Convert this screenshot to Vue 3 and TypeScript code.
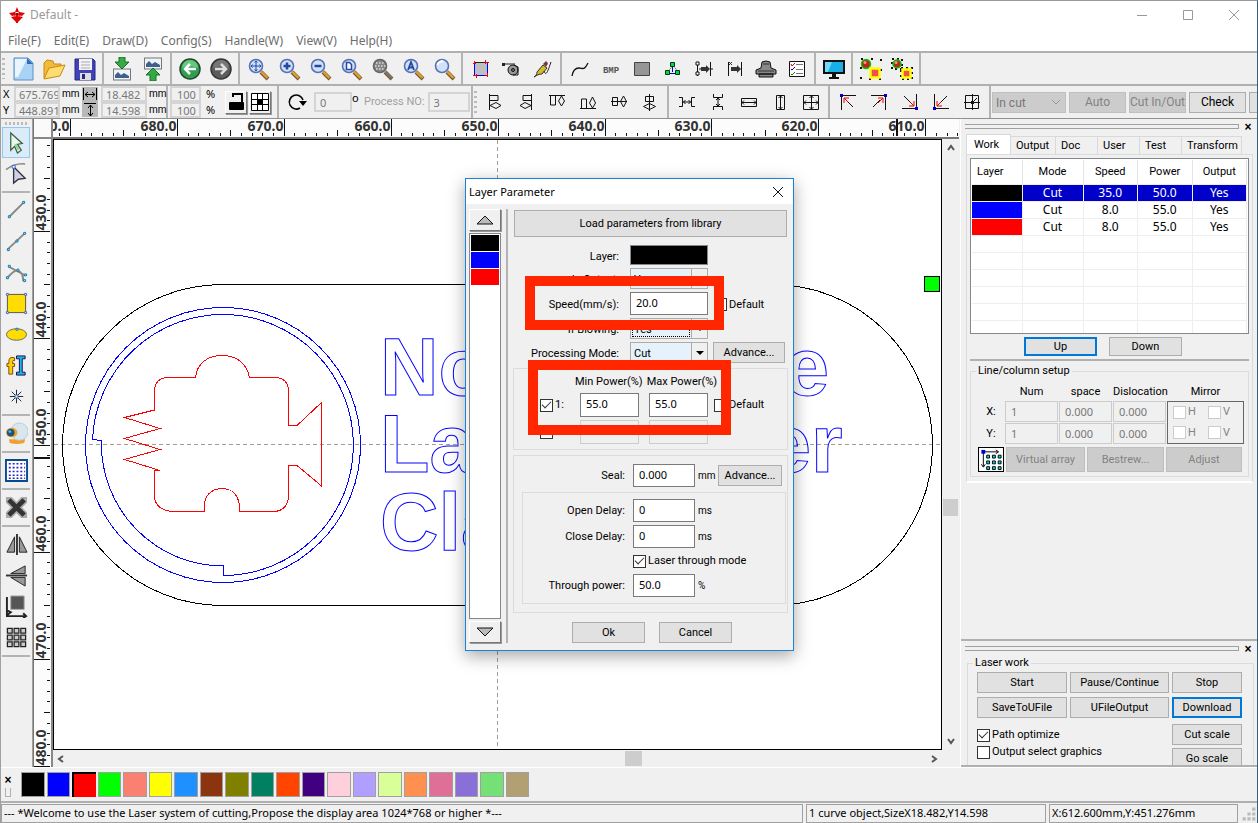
<script setup lang="ts">
import { ref } from 'vue'

type IconGroup = string[]

const menus = ['File(F)', 'Edit(E)', 'Draw(D)', 'Config(S)', 'Handle(W)', 'View(V)', 'Help(H)']

const lens = (inner: string, ring = '#5b6fb5', fill = '#cfe2fa', handle = '#e0a030') =>
  `<path d="M15 15l7 7" stroke="#7a5a30" stroke-width="4"/><path d="M15.500 15l6 6" stroke="${handle}" stroke-width="2.400"/><circle cx="10" cy="9" r="6.500" fill="${fill}" stroke="${ring}" stroke-width="1.600"/>${inner}`

const picture = (y: number) =>
  `<rect x="3.500" y="${y}" width="17" height="11" fill="#eef3f8" stroke="#777"/><path d="M5 ${y + 9}v-3l3-3 3 3 3-2 5 3v2z" fill="#3d618c"/>`

const icons: Record<string, string> = {
  new: '<path d="M3 1h14l5 5v17H3z" fill="#a9d3f5" stroke="#5b8fc4"/><path d="M4 2h12l-9 18H4z" fill="#e9f5ff"/><path d="M16 1v6h6z" fill="#2f70bd"/>',
  open: '<path d="M2 21V6l3-3 6 1 1 3h7v4" fill="#f3b93a" stroke="#c58a12"/><path d="M2 22l5-11 16-3-5 11z" fill="#ffdb70" stroke="#c58a12"/>',
  save: '<path d="M2 2h18l2 2v19H2z" fill="#4141bd" stroke="#26267d"/><path d="M6 2h13v11H6z" fill="#f4f4f4"/><path d="M8 5h9M8 8h9M8 11h9" stroke="#aaa"/><path d="M7 16h11v7H7z" fill="#ddd"/><path d="M9 17h3v5H9z" fill="#26267d"/>',
  import: picture(12) + '<path d="M9 0h6v5h4l-7 7-7-7h4z" fill="#36a845" stroke="#167326"/>',
  export: picture(1) + '<path d="M9 24h6v-6h4l-7-7-7 7h4z" fill="#36a845" stroke="#167326"/>',
  back: '<circle cx="12" cy="12" r="10" fill="#2fa050" stroke="#24452d" stroke-width="1.500"/><path d="M4 11a8 8 0 0 1 16 0c-5-2-11-2-16 0" fill="#66c77f"/><path d="M18 12H7m5-5l-5 5 5 5" fill="none" stroke="#fff" stroke-width="2.500"/>',
  forward: '<circle cx="12" cy="12" r="10" fill="#5c5c5c" stroke="#333" stroke-width="1.500"/><path d="M4 11a8 8 0 0 1 16 0c-5-2-11-2-16 0" fill="#777"/><path d="M6 12h11m-5-5l5 5-5 5" fill="none" stroke="#ddd" stroke-width="2.500"/>',
  zoomPan: lens('<path d="M10 4v10M5 9h10M8.500 5.500l1.500-1.500 1.500 1.500M8.500 12.500l1.500 1.500 1.500-1.500M6.500 7.500L5 9l1.500 1.500M13.500 7.500L15 9l-1.500 1.500" stroke="#2448a0" fill="none"/>'),
  zoomIn: lens('<path d="M10 5.500v7M6.500 9h7" stroke="#2448a0" stroke-width="2.500"/>'),
  zoomOut: lens('<path d="M6.500 9h7" stroke="#2448a0" stroke-width="2.500"/>'),
  zoomPage: lens('<path d="M7.500 5.500h3l2 2v5h-5z" fill="#fff" stroke="#2448a0" stroke-width="1.500"/>'),
  zoomGrid: lens('<path d="M6 6h9M5 9h11M6 12h9" stroke="#ddd" stroke-width="1.500" stroke-dasharray="1.500 1.500"/>', '#666', '#858585', '#777'),
  zoomAll: lens('<path d="M7 13l3-8 3 8M8 10.500h4" stroke="#2448a0" stroke-width="1.800" fill="none"/>'),
  zoomView: lens('<path d="M5.500 8a5 5 0 0 1 6-3.500" stroke="#fff" stroke-width="2" fill="none"/>'),
  bounds: '<path d="M5.500 5.500h13v13h-13z" fill="#bfbfbf" stroke="#222"/><path d="M5.500 6v12.500h13V6" fill="none" stroke="#00f"/><path d="M5.500 4v3M4 6.500h3M16.500 3v4M16 5.500h4M7.500 17v4M4 18.500h3M18.500 16v4M16 18.500h3" stroke="#f00"/>',
  tape: '<path d="M3 7h12" stroke="#222"/><path d="M2 6h3v3H2z" fill="#222"/><circle cx="13" cy="13" r="5" fill="#999" stroke="#111"/><path d="M14 8l4 2v8h-5" stroke="#111" fill="none"/><circle cx="13" cy="13" r="1.500" fill="#777" stroke="#111"/>',
  pen: '<path d="M3 20c2-1 3-3 3-5l6-7 4 3-5 6c-3 0-5 1-8 3z" fill="#d5bc24" stroke="#333"/><path d="M12 7l3-3 2 2-2 4z" fill="#555"/><path d="M13 14c2 6 4 0 7-9" stroke="#222" fill="none"/><path d="M14 6l2 2" stroke="#d00" stroke-width="1.500"/>',
  curve: '<path d="M4 19c1-6 3-8 7-8s5 3 9-5" stroke="#111" fill="none" stroke-width="1.300"/>',
  bmp: '<text x="12" y="16" text-anchor="middle" font-family="Liberation Mono, monospace" font-weight="700" font-size="9" fill="#555">BMP</text>',
  block: '<path d="M4.500 5.500h15v13h-15z" fill="#969696" stroke="#444"/>',
  tree: '<path d="M11.500 7v8M6 16.500h12" stroke="#00c" fill="none"/><path d="M12 9l-5 5M12 9l5 5" stroke="#666" stroke-dasharray="2 1"/><path d="M9.500 5.500h4v4h-4zM4.500 13.500h4v4h-4zM14.500 13.500h4v4h-4z" fill="#0d3" stroke="#032"/>',
  offsetA: '<path d="M5.500 5v14M18.500 5v14M7 12h4M18 12h3" stroke="#111"/><path d="M4 5h3v3H4zM4 15h3v3H4z" fill="#fff" stroke="#111"/><path d="M9 10h6v4H9zM14 8l4 4-4 4z" fill="#333"/>',
  offsetB: '<path d="M5.500 5v14M18.500 5v14" stroke="#111"/><path d="M8 10h6v4H8zM14 8l4 4-4 4z" fill="#333"/><path d="M6 5l3 3m0-3l-3 3" stroke="#333"/>',
  machine: '<path d="M7 11l1-6q4-2 8 0l1 6 5 2v4H2v-4zM5 17h14v3H5z" fill="#888" stroke="#111"/><path d="M9 7h6M4 14h16" stroke="#333"/>',
  checklist: '<path d="M4.500 4.500h15v15h-15z" fill="#fff" stroke="#111"/><path d="M11 7.500h7M11 12.500h7M11 16.500h7" stroke="#777"/><path d="M6 7l1 2 3-3" stroke="#d00" fill="none"/><path d="M6 12l1 1 3-3" stroke="#00c" fill="none"/><path d="M6 17l1 1 3-3" stroke="#080" fill="none"/>',
  screen: '<path d="M1 3h22v14H1z" fill="#111"/><path d="M3 5h18v10H3z" fill="#19aee6"/><path d="M3 5h7L6 15H3z" fill="#70dafa"/><path d="M10 17h4v3h3v2H7v-2h3z" fill="#111"/>',
  groupA: '<path d="M2 2h20v20H2z" fill="none" stroke="#111" stroke-width="2" stroke-dasharray="2 8"/><circle cx="7" cy="7" r="4.500" fill="#c32020" stroke="#0c0" stroke-width="1.500"/><circle cx="6" cy="5.500" r="1.500" fill="#ff9090"/><path d="M11.500 11.500h9v9h-9z" fill="#f05050" stroke="#ff0" stroke-width="2.500"/>',
  groupB: '<path d="M2 2h10v10H2zM11 11h11v11H11z" fill="none" stroke="#111" stroke-width="2" stroke-dasharray="2 3"/><circle cx="7" cy="7" r="4" fill="#c32020" stroke="#0c0" stroke-width="1.500"/><circle cx="6" cy="5.500" r="1.500" fill="#ff9090"/><path d="M12.500 12.500h8v8h-8z" fill="#f05050" stroke="#ff0" stroke-width="2.500"/>',
  alignL: '<path d="M6.500 4v16M7 5.500h8v5H7M7 15.500l6-3 5 3-5 3z"/>',
  alignR: '<path d="M17.500 4v16M17 5.500H9v5h8M17 15.500l-6-3-5 3 5 3z"/>',
  alignT: '<path d="M4 5.500h16M5.500 6v9h5V6M16.500 6l-3 5 3 5 3-5z"/>',
  alignB: '<path d="M4 18.500h16M5.500 18v-9h5v9M16.500 18l-3-5 3-6 3 6z"/>',
  alignCH: '<path d="M4 11.500h16M5.500 7.500h5v8h-5zM16.500 6l-3 5.500 3 5.500 3-5.500z"/>',
  alignCV: '<path d="M11.500 4v17M7.500 6.500h8v5h-8zM11.500 13.500l-6 3 6 3 6-3z"/>',
  spaceH: '<path d="M4 7.500h3.500v9H4M20 7.500h-3.500v9H20M8 12h8M10.500 10l-2 2 2 2M13.500 10l2 2-2 2"/>',
  spaceV: '<path d="M7.500 4v3.500h9V4M7.500 20v-3.500h9V20M12 8v8M10 10l2-2 2 2M10 14l2 2 2-2"/>',
  sameW: '<path d="M4.500 8.500h15v8h-15zM5 12.500h14M7 10.500l-2 2 2 2M17 10.500l2 2-2 2"/>',
  sameH: '<path d="M8.500 5.500h8v14h-8zM12.500 6v13M10.500 8l2-2 2 2M10.500 17l2 2 2-2"/>',
  sameS: '<path d="M4.500 5.500h15v14h-15zM5 12.500h14M12.500 6v13M10.500 8l2-2 2 2M10.500 17l2 2 2-2M7 10.500l-2 2 2 2M17 10.500l2 2-2 2"/>',
  cornerTL: '<path d="M5.500 20V5.500H20M11 11l6 6"/><path d="M12 12L8 8m0 5V8h5" stroke="#e00"/><path d="M4 4h3v3H4z" fill="#00c" stroke="none"/>',
  cornerTR: '<path d="M18.500 20V5.500H4M6 17l7-7"/><path d="M11 13l5-5m-5 0h5v5" stroke="#e00"/><path d="M17 4h3v3h-3z" fill="#00c" stroke="none"/>',
  cornerBR: '<path d="M18.500 4v14.500H4M6 6l6 6"/><path d="M12 12l4 4m-5 0h5v-5" stroke="#e00"/><path d="M17 17h3v3h-3z" fill="#00c" stroke="none"/>',
  cornerBL: '<path d="M5.500 4v14.500H20M18 6l-6 6"/><path d="M12 12l-4 4m0-5v5h5" stroke="#e00"/><path d="M4 17h3v3H4z" fill="#00c" stroke="none"/>',
  cornerC: '<path d="M5.500 5.500h13v13h-13z"/><path d="M4 12.500h16M12.500 4v16"/><path d="M17 8l-4 4"/><path d="M11 11h3v3h-3z" fill="#111" stroke="none"/>',
  select: '<path d="M6 2l12 11-5 1 4 6-4 3-3-7-4 4z" fill="#eaf8ea" stroke="#3b5f45" stroke-width="1.300"/><path d="M10 14l3 6 2-1-3-6z" fill="#8fd49b"/>',
  node: '<path d="M1 8q9-7 20-6" stroke="#888" stroke-width="1.600" fill="none"/><path d="M9 5l12 12-7 1-5 4z" fill="#ccd2ee" stroke="#333" stroke-width="1.400"/><path d="M7.500 3.500h3v3h-3z" fill="#fff" stroke="#36c"/>',
  line: '<path d="M4 19L19 4" stroke="#888" stroke-width="2"/><path d="M3.500 17.500h2v2h-2zM18.500 2.500h2v2h-2z" fill="#fff" stroke="#07a"/>',
  polyline: '<path d="M3 20L20 4" stroke="#888" stroke-width="2"/><path d="M2.500 19.500h2v2h-2zM19.500 2.500h2v2h-2zM11.500 10.500h2v2h-2z" fill="#fff" stroke="#07a"/>',
  bezier: '<path d="M2 18q8-9 11-8 6 1 6 11M4 6l17 9" stroke="#888" stroke-width="2" fill="none"/><path d="M1.500 16.500h2v2h-2zM3.500 4.500h2v2h-2zM12.500 8.500h2v2h-2zM20.500 13.500h2v2h-2zM19.500 19.500h2v2h-2z" fill="#fff" stroke="#07a"/>',
  rect: '<path d="M2.500 2.500h19v19h-19z" fill="#fd0" stroke="#555"/><path d="M1.500 1.500h2v2h-2zM20.500 1.500h2v2h-2zM1.500 20.500h2v2h-2zM20.500 20.500h2v2h-2z" fill="#fff" stroke="#46c"/>',
  ellipse: '<ellipse cx="12" cy="12" rx="10.500" ry="6" fill="#fd0" stroke="#665"/><path d="M11.500 5.500h2v2h-2z" fill="#fff" stroke="#07a"/>',
  text: '<path d="M10 4q-6-2-6 4v2H2v3h2v8h4v-8h2v-3H8V8q0-2 2-1z" fill="#fc1" stroke="#764d00"/><path d="M12 2h9v3h-3v14h3v3h-9v-3h3V5h-3z" fill="#1fb2e5" stroke="#115"/>',
  point: '<path d="M12 5v14M5 12h14M7 7l10 10M17 7L7 17" stroke="#222"/><path d="M10.500 10.500h3v3h-3z" fill="#fff" stroke="#36c"/>',
  camera: '<path d="M4 18h17l-1 4q-8 2-15 0z" fill="#f0a030"/><circle cx="15" cy="10" r="9" fill="#d8e6ef" stroke="#bccad2"/><ellipse cx="7" cy="11" rx="6" ry="5" fill="#f4a127"/><circle cx="6" cy="11" r="4" fill="#185880"/><circle cx="5" cy="10" r="1.500" fill="#51b5ea"/>',
  array: '<path d="M1 1h22v22H1z" fill="#fff" stroke="#0a4a90" stroke-width="2"/><path d="M4 5h17M4 9h17M4 13h17M4 17h17M4 20h17" stroke="#22c" stroke-width="1.600" stroke-dasharray="2 2"/>',
  delete: '<path d="M1 1h6l5 5 5-5h6v6l-5 5 5 5v6h-6l-5-5-5 5H1v-6l5-5-5-5z" fill="#aaa"/><path d="M4 4l16 16M20 4L4 20" stroke="#333" stroke-width="5"/>',
  flipH: '<path d="M10 4v16H2zM15 4v16h8z" fill="#999" stroke="#222"/><path d="M12.500 1v22" stroke="#333" stroke-width="2"/>',
  flipV: '<path d="M21 2v8H6zM21 14v9L6 14z" fill="#999" stroke="#222"/><path d="M1 12h22" stroke="#333" stroke-width="2"/>',
  origin: '<path d="M6 1h14v14H6z" fill="#555" stroke="#aaa"/><path d="M2 2v20h20M19 19l3 3-3 2M2 16l4 2-4 3" fill="none" stroke="#222" stroke-width="2"/>',
  tiles: '<path d="M2.500 2.500h5v5h-5zM9.500 2.500h5v5h-5zM16.500 2.500h5v5h-5zM2.500 9.500h5v5h-5zM9.500 9.500h5v5h-5zM16.500 9.500h5v5h-5zM2.500 16.500h5v5h-5zM9.500 16.500h5v5h-5zM16.500 16.500h5v5h-5z" fill="#ccc" stroke="#222" stroke-width="1.300"/>',
}

const mainGroups: IconGroup[] = [
  ['new', 'open', 'save'],
  ['import', 'export'],
  ['back', 'forward'],
  ['zoomPan', 'zoomIn', 'zoomOut', 'zoomPage', 'zoomGrid', 'zoomAll', 'zoomView'],
  ['bounds', 'tape', 'pen'],
  ['curve', 'bmp', 'block', 'tree', 'offsetA', 'offsetB', 'machine', 'checklist'],
  ['screen'],
  ['groupA', 'groupB'],
]
const alignGroups: IconGroup[] = [
  ['alignL', 'alignR', 'alignT', 'alignB', 'alignCH', 'alignCV'],
  ['spaceH', 'spaceV', 'sameW', 'sameH', 'sameS'],
  ['cornerTL', 'cornerTR', 'cornerBR', 'cornerBL', 'cornerC'],
]
const toolGroups: IconGroup[] = [
  ['select', 'node'],
  ['line', 'polyline', 'bezier', 'rect', 'ellipse', 'text', 'point'],
  ['camera'],
  ['array'],
  ['delete'],
  ['flipH', 'flipV', 'origin', 'tiles'],
]

interface Tick { at: number; size: 'major' | 'mid' | 'minor'; label?: string }
function makeTicks(first: number, start: number, step: number): Tick[] {
  const ticks: Tick[] = []
  for (let i = -10; i < 90; i++) {
    const size = i % 10 === 0 ? 'major' : i % 5 === 0 ? 'mid' : 'minor'
    ticks.push({
      at: Math.round(first + i * 10.69) + 0.5,
      size,
      label: size === 'major' ? (start + (i / 10) * step).toFixed(1) : undefined,
    })
  }
  return ticks
}
const hTicks = makeTicks(17, 690, -10)
const vTicks = makeTicks(92, 430, 10)
const tickLength = { major: 17, mid: 6, minor: 3 }

const swatches = [
  '#000', '#00f', '#f00', '#0f0', '#fa8072', '#ff0', '#1e90ff', '#8b3510', '#808000', '#008060',
  '#ff4500', '#400080', '#ffd0dc', '#b09fff', '#d8ff98', '#ff9050', '#de7098', '#8870d8', '#75e075', '#b3a072',
]
const layers = [
  { color: '#000', mode: 'Cut', speed: '35.0', power: '50.0', output: 'Yes' },
  { color: '#00f', mode: 'Cut', speed: '8.0', power: '55.0', output: 'Yes' },
  { color: '#f00', mode: 'Cut', speed: '8.0', power: '55.0', output: 'Yes' },
]
const tabs = ['Work', 'Output', 'Doc', 'User', 'Test', 'Transform']
const activeTab = ref('Work')
const selectedLayer = ref(0)
const selectedColor = ref(2)
</script>

<template>
  <div class="app">
    <header class="titlebar">
      <svg class="logo" viewBox="0 0 16 16" aria-hidden="true">
        <path d="M8 0l2 5H6zM0 6l6-1 1 3-4 1zM16 6l-6-1-1 3 4 1zM2 10l5-1v6zM14 10l-5-1v6zM7 6h2v10H7z" fill="#e60000" />
        <path d="M5 5l6 4M11 5L5 9" stroke="#600" stroke-width=".6" />
      </svg>
      <span class="caption">Default -</span>
      <button class="winbtn" aria-label="Minimize"><svg viewBox="0 0 12 12"><path d="M1 6.500h10" /></svg></button>
      <button class="winbtn" aria-label="Maximize"><svg viewBox="0 0 12 12"><path d="M1.500 1.500h9v9h-9z" /></svg></button>
      <button class="winbtn" aria-label="Close"><svg viewBox="0 0 12 12"><path d="M1 1l10 10M11 1L1 11" /></svg></button>
    </header>
    <nav class="menubar">
      <button v-for="m in menus" :key="m">{{ m }}</button>
    </nav>

    <div class="toolbar main">
      <span class="grip"></span>
      <div v-for="(g, i) in mainGroups" :key="i" class="group">
        <button v-for="n in g" :key="n" class="tool" :aria-label="n"><svg viewBox="0 0 24 24" v-html="icons[n]"></svg></button>
      </div>
    </div>

    <div class="toolbar second">
      <div class="cluster position">
        <div class="lines">
          <label>X <input value="675.769" /></label>
          <label>Y <input value="448.891" /></label>
        </div>
        <div class="lines unit"><span>mm</span><span>mm</span></div>
        <div class="arrows">
          <svg viewBox="0 0 16 30"><path d="M1.500 1v12M14.500 1v12M3 7.500h10M6 5L3 7.500l3 2.500M10 5l3 2.500-3 2.500M2 16.500h12M8.500 19v10M6 21l2.500-3 2.500 3M6 26l2.500 3 2.500-3" /></svg>
        </div>
        <div class="lines size">
          <input aria-label="Width" value="18.482" />
          <input aria-label="Height" value="14.598" />
        </div>
        <div class="lines unit"><span>mm</span><span>mm</span></div>
      </div>
      <div class="cluster scale">
        <div class="lines pct">
          <input aria-label="Scale X" value="100" />
          <input aria-label="Scale Y" value="100" />
        </div>
        <div class="lines unit"><span>%</span><span>%</span></div>
        <button class="raised" aria-label="Lock ratio"><svg viewBox="0 0 20 20"><path d="M7 5V2h9v8" fill="none" stroke="#000" stroke-width="2" /><rect x="3" y="10" width="15" height="8" rx="1" /></svg></button>
        <button class="raised" aria-label="Anchor"><svg viewBox="0 0 20 20"><path d="M1.500 1.500h17v17h-17zM7.500 1v18M12.500 1v18M1 7.500h18M1 12.500h18" fill="#fff" stroke="#000" /><path d="M7 7h6v6H7z" /></svg></button>
      </div>
      <div class="cluster rotate">
        <svg class="rot" viewBox="0 0 20 20"><path d="M13 16A7 7 0 1 1 16 8" fill="none" stroke="#000" stroke-width="1.600" /><path d="M12 9h8l-4 5z" /></svg>
        <input aria-label="Angle" class="angle" value="0" />
        <sup>o</sup>
        <label class="process">Process NO: <input value="3" /></label>
      </div>
      <span class="grip"></span>
      <div v-for="(g, i) in alignGroups" :key="i" class="group glyphs">
        <button v-for="n in g" :key="n" class="tool" :aria-label="n"><svg viewBox="0 0 24 24" v-html="icons[n]"></svg></button>
      </div>
      <div class="cutbar">
        <span class="combo off"><select aria-label="Lead" disabled><option>In cut</option></select><svg viewBox="0 0 10 6"><path d="M1 1l4 4 4-4" /></svg></span>
        <button class="btn" disabled>Auto</button>
        <button class="btn" disabled>Cut In/Out</button>
        <button class="btn">Check</button>
        <button class="btn cut" aria-label="More"></button>
      </div>
    </div>

    <main class="body">
      <aside class="tools">
        <span class="hgrip"></span>
        <div v-for="(g, i) in toolGroups" :key="i" class="toolgroup">
          <button v-for="n in g" :key="n" class="tool" :class="{ on: n === 'select' }" :aria-label="n"><svg viewBox="0 0 24 24" v-html="icons[n]"></svg></button>
        </div>
      </aside>

      <section class="workspace">
        <div class="corner"></div>
        <svg class="hruler">
          <g v-for="t in hTicks" :key="t.at">
            <path :d="`M${t.at} 17V${17 - tickLength[t.size]}`" />
            <text v-if="t.label" :x="t.at - 1" y="12" text-anchor="end">{{ t.label }}</text>
          </g>
          <path d="M844 0V17" stroke-width="2" />
        </svg>
        <svg class="vruler">
          <g v-for="t in vTicks" :key="t.at">
            <path :d="`M16 ${t.at}H${16 - tickLength[t.size]}`" />
            <text v-if="t.label" :transform="`translate(12 ${t.at - 1}) rotate(-90)`">{{ t.label }}</text>
          </g>
          <path d="M0 319H16" stroke-width="2" />
        </svg>
        <div class="canvas">
          <svg>
            <g transform="translate(-54 -140)" fill="none">
              <path d="M497.500 140V760M54 444.500H942" class="guide" />
              <rect x="62.500" y="284.500" width="870" height="321" rx="160" stroke="#000" />
              <g stroke="#00f">
                <circle cx="223" cy="445" r="137.500" />
                <path d="M92.500 439.500A130.500 130.500 0 1 1 223.500 575.500V566A122 122 0 0 1 101.500 440.500Z" />
              </g>
              <path
                stroke="#f00"
                d="M154.500 410V391Q155 378 168 377.500H195.500C197 363 208 355.500 222 355.500S247 363 249.500 377.500H275Q288 378 288.500 391V425.500H297L321.500 402.500V486L297 465.500H288.500V498Q287 510 275 511.500H239V503C237 493 230 488.500 222 488.500S206 493 204.500 503V511.500H171Q156 509 154.500 498V471L160 470.500L124.500 459.500L160 449.500L124.500 438.500L160 428.500L124.500 417.500Z"
              />
              <g class="engraving">
                <text x="380" y="394.500">No</text>
                <text x="380" y="471.500">La</text>
                <text x="380" y="549.500">Cla</text>
                <text x="784" y="394.500">e</text>
                <text x="766" y="471.500">er</text>
              </g>
              <rect x="924.500" y="276.500" width="15" height="15" fill="#0f0" stroke="#000" />
            </g>
          </svg>
        </div>
        <div class="scroll vertical">
          <svg viewBox="0 0 8 6"><path d="M1 5l3-4 3 4" /></svg>
          <i></i>
          <svg viewBox="0 0 8 6"><path d="M1 1l3 4 3-4" /></svg>
        </div>
        <div class="scroll horizontal">
          <svg viewBox="0 0 6 8"><path d="M5 1L1 4l4 3" /></svg>
          <i></i>
          <svg viewBox="0 0 6 8"><path d="M1 1l4 3-4 3" /></svg>
        </div>
      </section>

      <aside class="side">
        <div class="dockbar"><span></span><button aria-label="Close panel">×</button></div>
        <div class="tabs" role="tablist">
          <button v-for="t in tabs" :key="t" role="tab" :class="{ active: t === activeTab }" @click="activeTab = t">{{ t }}</button>
        </div>
        <div class="tabpage">
          <div class="tablebox">
            <table>
              <thead><tr><th>Layer</th><th>Mode</th><th>Speed</th><th>Power</th><th>Output</th></tr></thead>
              <tbody>
                <tr v-for="(l, i) in layers" :key="i" :class="{ selected: i === selectedLayer }" @click="selectedLayer = i">
                  <td class="chip"><span :style="{ background: l.color }"></span></td>
                  <td>{{ l.mode }}</td><td>{{ l.speed }}</td><td>{{ l.power }}</td><td>{{ l.output }}</td>
                </tr>
                <tr v-for="n in 6" :key="'e' + n"><td></td><td></td><td></td><td></td><td></td></tr>
              </tbody>
            </table>
          </div>
          <div class="order">
            <button class="btn focus">Up</button>
            <button class="btn">Down</button>
          </div>
          <fieldset class="array">
            <legend>Line/column setup</legend>
            <div class="arraygrid">
              <span></span><span class="colhead">Num</span><span class="colhead">space</span><span class="colhead">Dislocation</span><span class="colhead">Mirror</span>
              <span>X:</span><input aria-label="X num" disabled value="1" /><input aria-label="X space" disabled value="0.000" /><input aria-label="X dislocation" disabled value="0.000" />
              <div class="mirror">
                <label><input type="checkbox" disabled />H</label><label><input type="checkbox" disabled />V</label>
                <label><input type="checkbox" disabled />H</label><label><input type="checkbox" disabled />V</label>
              </div>
              <span>Y:</span><input aria-label="Y num" disabled value="1" /><input aria-label="Y space" disabled value="0.000" /><input aria-label="Y dislocation" disabled value="0.000" />
            </div>
            <div class="arraybtns">
              <button class="pattern" aria-label="Array pattern">
                <svg viewBox="0 0 24 24"><path d="M0 0h24v24H0z" fill="#fff" /><path d="M4 4h15M4 4v15M17 2l3 2-3 2M2 17l2 3 2-3" fill="none" stroke="#000" /><path d="M2 2h4v4H2z" fill="#00c" /><path d="M7.500 7.500h3v3h-3zM13.500 7.500h3v3h-3zM19.500 7.500h3v3h-3zM7.500 13.500h3v3h-3zM13.500 13.500h3v3h-3zM19.500 13.500h3v3h-3zM7.500 19.500h3v3h-3zM13.500 19.500h3v3h-3zM19.500 19.500h3v3h-3z" fill="#0dd" stroke="#000" /></svg>
              </button>
              <button class="btn" disabled>Virtual array</button>
              <button class="btn" disabled>Bestrew...</button>
              <button class="btn" disabled>Adjust</button>
            </div>
          </fieldset>
        </div>
        <div class="laser">
          <div class="dockbar"><span></span><button aria-label="Close laser panel">×</button></div>
          <fieldset>
            <legend>Laser work</legend>
            <div class="lasergrid">
              <button class="btn">Start</button><button class="btn">Pause/Continue</button><button class="btn">Stop</button>
              <button class="btn">SaveToUFile</button><button class="btn">UFileOutput</button><button class="btn focus">Download</button>
              <div class="options">
                <label><input type="checkbox" checked />Path optimize</label>
                <label><input type="checkbox" />Output select graphics</label>
              </div>
              <div class="scales">
                <button class="btn">Cut scale</button>
                <button class="btn">Go scale</button>
              </div>
            </div>
          </fieldset>
        </div>
      </aside>
    </main>

    <div class="colorbar">
      <div class="handle"><button aria-label="Close palette">×</button><span></span></div>
      <div class="swatches">
        <button
          v-for="(c, i) in swatches" :key="c" :aria-label="'Layer colour ' + c"
          :class="{ current: i === selectedColor }" :style="{ background: c }" @click="selectedColor = i"
        ></button>
      </div>
    </div>

    <footer class="status">
      <span class="msg">--- *Welcome to use the Laser system of cutting,Propose the display area 1024*768 or higher *---</span>
      <span class="obj">1 curve object,SizeX18.482,Y14.598</span>
      <span class="pos">X:612.600mm,Y:451.276mm</span>
      <svg class="sizer" viewBox="0 0 10 10"><path d="M7 1h2v2H7zM7 4h2v2H7zM4 4h2v2H4zM7 7h2v2H7zM4 7h2v2H4zM1 7h2v2H1z" /></svg>
    </footer>

    <div class="dialog" role="dialog" aria-labelledby="dlg-title">
      <div class="dlghead">
        <span id="dlg-title">Layer Parameter</span>
        <button aria-label="Close dialog"><svg viewBox="0 0 12 12"><path d="M1 1l10 10M11 1L1 11" /></svg></button>
      </div>
      <div class="dlgbody">
        <div class="picker">
          <button class="raised" aria-label="Previous layer"><svg viewBox="0 0 20 12"><path d="M10 2l8 8H2z" /></svg></button>
          <ul><li v-for="l in layers" :key="l.color" :style="{ background: l.color }"></li></ul>
          <button class="raised" aria-label="Next layer"><svg viewBox="0 0 20 12"><path d="M10 10L2 2h16z" /></svg></button>
        </div>
        <form class="form" @submit.prevent>
          <button class="btn load" type="button">Load parameters from library</button>
          <div class="fields">
            <span class="lab">Layer:</span><span class="layercolor"></span><span></span>
            <label class="lab" for="f-out">Is Output:</label>
            <span class="combo"><select id="f-out"><option>Yes</option></select><i></i></span><span></span>
            <label class="lab" for="f-speed">Speed(mm/s):</label><input id="f-speed" value="20.0" />
            <label class="check"><input type="checkbox" />Default</label>
            <label class="lab" for="f-blow">If Blowing:</label>
            <span class="combo dotted"><select id="f-blow"><option>Yes</option></select><i></i></span><span></span>
            <label class="lab" for="f-mode">Processing Mode:</label>
            <span class="combo"><select id="f-mode"><option>Cut</option></select><i></i></span>
            <button class="btn adv" type="button">Advance...</button>
          </div>
          <div class="box power">
            <div class="heads"><span>Min Power(%)</span><span>Max Power(%)</span></div>
            <label class="check"><input type="checkbox" checked />1:</label>
            <input aria-label="Min power 1" value="55.0" /><input aria-label="Max power 1" value="55.0" />
            <label class="check default"><input type="checkbox" />Default</label>
            <label class="check"><input type="checkbox" />2:</label>
            <input aria-label="Min power 2" disabled /><input aria-label="Max power 2" disabled /><span></span>
          </div>
          <div class="box seal">
            <div class="row">
              <label class="lab" for="f-seal">Seal:</label><input id="f-seal" value="0.000" /><span class="u">mm</span>
              <button class="btn" type="button">Advance...</button>
            </div>
            <div class="box delays">
              <div class="row"><label class="lab" for="f-open">Open Delay:</label><input id="f-open" value="0" /><span class="u">ms</span></div>
              <div class="row"><label class="lab" for="f-close">Close Delay:</label><input id="f-close" value="0" /><span class="u">ms</span></div>
              <div class="row tick"><span class="lab"></span><label class="check"><input type="checkbox" checked />Laser through mode</label></div>
              <div class="row"><label class="lab" for="f-thr">Through power:</label><input id="f-thr" value="50.0" /><span class="u">%</span></div>
            </div>
          </div>
          <div class="actions">
            <button class="btn" type="button">Ok</button>
            <button class="btn" type="button">Cancel</button>
          </div>
        </form>
      </div>
      <div class="mark speedmark"></div>
      <div class="mark powermark"></div>
    </div>
  </div>
</template>

<style>
body { margin: 0; overflow: hidden; }
</style>

<style scoped>
* { box-sizing: border-box; }
.app {
  position: relative; display: flex; flex-direction: column; height: 100vh;
  border-left: 1px solid #a0a0a0; border-right: 1px solid #35607c; border-top: 1px solid #999;
  background: #f0f0f0; color: #000;
  font-family: Roboto, "Liberation Sans", sans-serif; font-size: 11px; line-height: 14px;
}
button, input, select { font: inherit; color: inherit; margin: 0; padding: 0; border-radius: 0; min-width: 0; }
button { border: 0; background: none; white-space: nowrap; }
svg { display: block; }
input { border: 1px solid #7a7a7a; background: #fff; font-family: "Noto Sans", sans-serif; font-size: 11px; }

.titlebar { display: flex; align-items: center; height: 28px; flex: none; background: #fff; padding-left: 8px; }
.logo { width: 16px; height: 16px; margin-right: 5px; }
.caption { flex: 1; color: #999; font: 12px/16px "Noto Sans", sans-serif; }
.winbtn { width: 46px; height: 28px; display: grid; place-items: center; }
.winbtn svg { width: 12px; height: 12px; fill: none; stroke: #999; }
.menubar { display: flex; gap: 13px; height: 22px; flex: none; background: #fff; padding-left: 7px; }
.menubar button { font: 12px/24px "Noto Sans", sans-serif; color: #6d6d6d; }

.toolbar { display: flex; align-items: stretch; flex: none; border-top: 2px solid #b0b0b0; overflow: hidden; }
.main { height: 33px; }
.second { height: 34px; }
.grip { width: 3px; margin: 5px 0 5px 1px; background: repeating-linear-gradient(#bbb 0 2px, transparent 2px 5px); flex: none; }
.group { display: flex; align-items: center; padding: 0 2px; border-right: 2px solid #b4b4b4; flex: none; }
.tool { width: 31px; height: 28px; display: grid; place-items: center; flex: none; }
.tool svg { width: 23px; height: 23px; fill: none; }
.main .tool svg { width: 24px; height: 24px; }
.glyphs .tool svg { width: 24px; height: 24px; stroke: #111; }
.cluster { display: flex; align-items: center; border-right: 2px solid #b4b4b4; flex: none; font-family: "Noto Sans", sans-serif; }
.cluster > * { flex: none; }
.cluster input { border: 2px solid #d4d4d4; background: #f0f0f0; color: #777; }
.lines { display: flex; flex-direction: column; }
.lines label { display: flex; align-items: center; justify-content: space-between; font-size: 11px; }
.lines input { height: 16px; width: 46px; padding: 0 0 0 3px; line-height: 12px; }
.lines span { height: 16px; line-height: 16px; }
.position { width: 167px; padding-left: 2px; }
.position > .lines:first-child { width: 57px; }
.position .unit { margin-left: 2px; width: 20px; font-size: 10px; font-family: Roboto, sans-serif; }
.position .unit:last-child { width: 17px; }
.arrows { width: 16px; height: 30px; background: #b8b8b8; margin-right: 3px; }
.arrows svg { fill: none; stroke: #000; height: 30px; }
.scale { width: 111px; padding-left: 2px; }
.pct input { width: 31px; padding-left: 5px; }
.scale .unit { width: 24px; padding-left: 5px; }
.raised { border: 1px solid; border-color: #fff #777 #777 #fff; box-shadow: 1px 1px 0 #999; background: #f0f0f0; display: grid; place-items: center; }
.scale .raised { width: 22px; height: 23px; margin-right: 2px; }
.scale .raised svg { width: 20px; height: 20px; }
.rotate { width: 194px; padding-left: 8px; }
.rot { width: 20px; height: 20px; margin-right: 7px; }
.angle { width: 38px; height: 20px; padding-left: 4px; }
.rotate sup { width: 12px; line-height: 24px; height: 32px; font-size: 11px; vertical-align: baseline; }
.process { display: flex; align-items: center; gap: 3px; color: #a0a0a0; font-family: Roboto, sans-serif; white-space: nowrap; }
.process input { width: 42px; height: 20px; padding-left: 4px; }
.cutbar { display: flex; align-items: center; gap: 3px; padding-left: 1px; flex: 1; min-width: 0; overflow: hidden; font-size: 12px; }
.cutbar > * { width: 57px; height: 21px; flex: none; }
.cutbar .combo { width: 74px; height: 21px; }
.cutbar .cut { width: 20px; }

.btn { background: #e1e1e1; border: 1px solid #adadad; text-align: center; line-height: 14px; }
.btn:disabled { background: #ccc; border-color: #bfbfbf; color: #838383; }
.btn.focus { border: 2px solid #0078d7; }

.combo { position: relative; display: flex; border: 1px solid #acacac; background: #f0f0f0; height: 21px; }
.combo select { appearance: none; border: 0; flex: 1; margin: 1px; padding: 2px 0 0 2px; background: #e5f1fb; outline: none; }
.combo i { width: 16px; border-left: 1px solid #acacac; display: grid; place-items: center; }
.combo i::after { content: ""; border: 4px solid transparent; border-top-color: #000; border-bottom: 0; }
.combo.dotted select { outline: 1px dotted #000; outline-offset: -1px; }
.combo.off { background: #ccc; border-color: #bfbfbf; color: #777; align-items: center; }
.combo.off select { background: none; color: #777; opacity: 1; }
.combo.off svg { width: 10px; height: 6px; margin-right: 4px; fill: none; stroke: #999; }

.body { flex: 1; min-height: 0; display: flex; border-top: 1px solid #909090; }
.tools { width: 32px; flex: none; border-right: 1px solid #a0a0a0; }
.hgrip { display: block; height: 3px; margin: 3px 4px 0; background: repeating-linear-gradient(90deg, #bbb 0 2px, transparent 2px 4px); }
.toolgroup { padding: 2px 0; margin: 0 2px 0 1px; border-bottom: 2px solid #b4b4b4; }
.toolgroup .tool { width: 28px; height: 31px; }
.toolgroup .on { background: #dcebf8; border: 1px solid #90c8f0; }

.workspace {
  flex: 1; min-width: 0; display: grid; grid-template: 20px minmax(0, 1fr) 17px / 19px minmax(0, 1fr) 17px;
  border-left: 1px solid #777; padding-right: 1px;
}
.corner { background: #fafafa; border-right: 2px solid #888; border-bottom: 2px solid #888; }
.hruler { grid-column: 2 / 4; width: 100%; height: 20px; background: #fcfcfc; border-bottom: 2px solid #777; }
.vruler { grid-row: 2 / 4; width: 19px; height: 100%; background: #fcfcfc; border-right: 2px solid #888; }
.hruler path, .vruler path { stroke: #111; shape-rendering: crispEdges; }
.hruler text, .vruler text { font: bold 14px "Noto Sans", sans-serif; fill: #333; }
.canvas { border: 1px solid #000; background: #fff; overflow: hidden; }
.canvas svg { width: 100%; height: 100%; shape-rendering: crispEdges; }
.guide { stroke: #a0a090; stroke-dasharray: 4 3; }
.engraving { font: bold 81px "Liberation Sans", sans-serif; stroke: #00f; }
.scroll { display: flex; align-items: center; justify-content: space-between; background: #f0f0f0; }
.scroll svg { width: 8px; height: 8px; fill: none; stroke: #555; stroke-width: 2; }
.scroll i { background: #cdcdcd; }
.vertical { flex-direction: column; padding: 5px 0; }
.vertical i { width: 15px; height: 17px; margin-top: 126px; }
.horizontal { grid-column: 2; padding: 0 4px; }
.horizontal i { width: 17px; height: 15px; margin-left: 272px; }

.side { width: 297px; flex: none; display: flex; flex-direction: column; border-left: 1px solid #fff; }
.dockbar { display: flex; align-items: center; height: 15px; padding-left: 4px; flex: none; }
.dockbar span { flex: 1; height: 5px; border: solid #a0a0a0; border-width: 1px 1px 1px 0; }
.dockbar button, .handle button { width: 18px; font: bold 12px/14px "Liberation Sans", sans-serif; }
.tabs { display: flex; align-items: flex-end; height: 20px; padding-left: 5px; flex: none; font-size: 11px; }
.tabs button { height: 18px; padding: 0 0 0 5px; text-align: left; border: 1px solid #d9d9d9; border-width: 1px 1px 0 0; width: 42px; }
.tabs button:nth-child(2) { width: 45px; }
.tabs button:nth-child(6) { width: 60px; }
.tabs .active { height: 20px; width: 45px; background: #fff; padding-left: 7px; border-left-width: 1px; }
.tabpage { margin: 0 4px 0 5px; border: 1px solid #dcdcdc; border-bottom: 2px solid #fff; padding: 3px 3px 4px; display: flex; flex-direction: column; }
.tablebox { border: 1px solid #828790; background: #fff; height: 176px; padding: 1px; overflow: hidden; }
table { border-collapse: collapse; table-layout: fixed; width: 100%; text-align: center; }
th { font-weight: 400; height: 24px; padding: 0; border-right: 1px solid #e5e5e5; font-size: 11px; }
th:nth-child(1) { width: 50px; text-align: left; padding-left: 5px; }
th:nth-child(2) { width: 61px; }
td { height: 17px; padding: 0; border: 1px solid #eee; border-left: 0; font: 12px/15px "Noto Sans", sans-serif; }
.selected td { background: #0000c8; color: #fff; }
.chip, .selected .chip { background: #fff; }
.chip span { display: block; height: 16px; }
.order { display: flex; gap: 12px; padding: 3px 0 3px 54px; border-bottom: 2px solid #b0b0b0; }
.order .btn { width: 73px; height: 19px; }
.order .focus { line-height: 12px; }
fieldset { margin: 0; padding: 0; border: 1px solid #dcdcdc; min-width: 0; }
legend { padding: 0 2px; line-height: 14px; }
.array { margin-top: 3px; padding: 0 4px 4px 7px; }
.array legend { margin-left: -2px; }
.arraygrid { display: grid; grid-template-columns: 26px 53px 53px 53px 77px; column-gap: 1px; row-gap: 1px; align-items: center; text-align: center; }
.arraygrid > span { line-height: 20px; white-space: nowrap; }
.arraygrid > .colhead { line-height: 16px; padding-top: 6px; }
.arraygrid > input { height: 21px; width: 100%; border: 1px solid #ccc; background: #f0f0f0; color: #777; padding-left: 5px; }
.mirror { grid-row: 2 / 4; grid-column: 5; border: 1px solid #666; height: 43px; display: grid; grid-template-columns: 1fr 1fr; color: #838383; padding-left: 5px; align-items: center; }
.mirror label { display: flex; align-items: center; gap: 2px; }
.arraybtns { display: grid; grid-template-columns: 26px 79px 77px 76px; gap: 2px; margin-top: 3px; height: 25px; }
.pattern { border: 1px solid #000; }
.pattern svg { width: 24px; height: 23px; }
input[type="checkbox"] { appearance: none; width: 13px; height: 13px; flex: none; border: 1px solid #333; background: #fff; display: grid; place-items: center; }
input[type="checkbox"]:checked::after { content: ""; width: 8px; height: 4px; border: solid #333; border-width: 0 0 1px 1px; rotate: -45deg; margin-bottom: 3px; }
input[type="checkbox"]:disabled { border-color: #ccc; }
.laser { margin-top: auto; height: 128px; border-top: 2px solid #b0b0b0; border-bottom: 2px solid #b0b0b0; overflow: hidden; flex: none; }
.laser fieldset { margin: 0 3px 0 6px; padding: 2px 11px 0 9px; height: 140px; }
.laser legend { margin-left: -4px; }
.lasergrid { display: grid; grid-template-columns: 90px 99px 70px; column-gap: 3px; row-gap: 4px; }
.lasergrid .btn { height: 21px; }
.options { grid-column: 1 / 3; display: flex; flex-direction: column; gap: 3px; padding-top: 6px; }
.options label, .check { display: flex; align-items: center; gap: 2px; white-space: nowrap; }
.scales { display: grid; gap: 3px; padding-top: 2px; align-content: start; }

.colorbar { display: flex; align-items: center; height: 34px; flex: none; border-top: 1px solid #fff; }
.handle { width: 20px; }
.handle button { display: block; width: 14px; }
.handle span { display: block; width: 6px; height: 9px; margin: 1px 0 0 4px; border: 1px solid #b0b0b0; border-top: 0; }
.swatches { display: grid; grid-template-columns: repeat(20, minmax(0, 1fr)); gap: 2px; width: 508px; height: 25px; }
.swatches button { border: 1px solid #a0a0a0; }
.swatches .current { border: solid #000; border-width: 2px 0 0 2px; }
.status { display: flex; align-items: center; gap: 3px; height: 22px; flex: none; border-top: 2px solid #b0b0b0; font: 11px/16px "Noto Sans", sans-serif; padding-top: 1px; }
.status span { height: 19px; border: 1px solid #a0a0a0; padding-left: 2px; white-space: nowrap; overflow: hidden; }
.msg { flex: 1; }
.obj { width: 240px; }
.pos { width: 189px; }
.sizer { width: 16px; height: 16px; fill: #bbb; }

.dialog { position: absolute; left: 464px; top: 177px; width: 329px; background: #f0f0f0; border: 1px solid #1883d7; box-shadow: 0 5px 16px rgba(0, 0, 0, .35); }
.dlghead { display: flex; align-items: center; justify-content: space-between; height: 25px; background: #fff; padding: 0 9px 0 3px; font: 11px/16px "Noto Sans", sans-serif; }
.dlghead button { width: 12px; height: 12px; }
.dlghead svg { width: 12px; height: 12px; fill: none; stroke: #111; }
.dlgbody { display: flex; padding: 5px 5px 5px 3px; }
.picker { width: 39px; padding-right: 5px; border-right: 2px solid #b4b4b4; display: flex; flex-direction: column; gap: 2px; height: 434px; }
.picker .raised { height: 22px; flex: none; }
.picker .raised svg { width: 20px; height: 12px; fill: #bbb; stroke: #111; }
.picker ul { flex: 1; margin: 0; padding: 1px; border: 1px solid #828790; background: #fff; list-style: none; }
.picker li { height: 16px; margin-bottom: 1px; }
.form { flex: 1; min-width: 0; margin-left: 5px; display: flex; flex-direction: column; }
.load { height: 27px; margin: 1px 1px 8px 1px; }
.fields { display: grid; grid-template-columns: 106px 78px 72px; column-gap: 11px; row-gap: 3px; align-items: center; }
.fields > :nth-child(3n) { margin-left: -5px; }
.fields > .adv { height: 21px; width: 72px; margin-left: -6px; }
.fields input:not([type]) { height: 23px; }
.lab { text-align: right; }
.fields .lab { padding-top: 3px; }
.fields .check { padding-top: 2px; }
.layercolor { height: 20px; background: #000; border: 1px solid #828790; }
.form input:not([type]) { padding: 0 0 3px 5px; }
.box { border: 1px solid #dcdcdc; }
.power { margin-top: 5px; height: 82px; padding: 5px 0 0 26px; display: grid; grid-template: 16px 24px 24px / 30px 59px 59px 70px; column-gap: 10px; row-gap: 3px; align-items: center; }
.power input:not([type]) { height: 24px; }
.power input:disabled { border-color: #ccc; background: #f0f0f0; }
.power .default { margin-left: -4px; }
.heads { grid-column: 1 / -1; display: flex; gap: 4px; padding-left: 35px; white-space: nowrap; }
.seal { margin-top: 5px; height: 158px; padding: 8px 1px 0 8px; }
.row { display: flex; align-items: center; height: 23px; }
.seal .row .lab { width: 103px; margin-right: 8px; flex: none; }
.seal .row input:not([type]) { width: 62px; height: 23px; flex: none; }
.u { width: 20px; padding-left: 3px; font-size: 10px; flex: none; }
.seal .row .btn { width: 64px; height: 21px; margin-left: 3px; }
.delays { margin-top: 5px; height: 112px; padding-top: 6px; }
.delays .row { margin-bottom: 3px; }
.seal .delays .row .lab { width: 102px; }
.delays .tick { height: 20px; }
.actions { display: flex; justify-content: center; gap: 14px; margin: 9px 0 2px; padding-left: 3px; }
.actions .btn { width: 73px; height: 21px; }
.mark { position: absolute; border: 10px solid #ff2600; pointer-events: none; }
.speedmark { left: 59px; top: 97px; width: 199px; height: 54px; }
.powermark { left: 62px; top: 181px; width: 203px; height: 75px; }
</style>
